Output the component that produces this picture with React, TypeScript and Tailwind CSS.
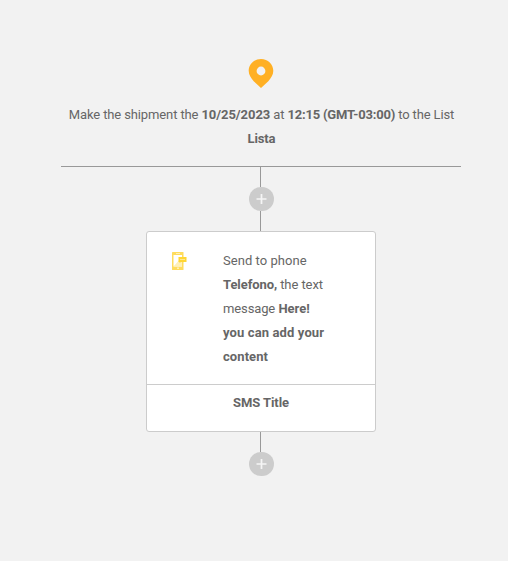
function PinIcon() {
  return (
    <svg width="26" height="30" viewBox="0 0 26 30" aria-hidden="true">
      <path
        fillRule="evenodd"
        fill="#ffb024"
        d="M13 1C6 1 .7 6.200 .7 12.800c0 4.200 2.300 7.200 5 10.400L13 30l7.300-6.800c2.700-3.200 5-6.200 5-10.400C25.300 6.200 20 1 13 1ZM13 8.600a4.400 4.400 0 1 1 0 8.800a4.400 4.400 0 0 1 0-8.800Z"
      />
    </svg>
  );
}

function PhoneIcon() {
  return (
    <svg className="block" width="16" height="18" viewBox="0 0 16 18" aria-hidden="true">
      <rect width="11.500" height="18" rx="0.6" fill="#ffdc5c" />
      <rect x="1.500" y="3" width="8.500" height="11.500" fill="#fff" />
      <path d="M1.500 14.500L10 5v9.500Z" fill="#fff0b8" />
      <rect x="4" y="1" width="4" height="1" fill="#fff0b8" />
      <rect x="5" y="15.500" width="2" height="1.500" fill="#fff0b8" />
      <path d="M6.500 5H14.500v5H9l-1.500 1V10h-1Z" fill="#ffd633" />
      <path d="M8 7.500h5" stroke="#ffe98c" />
    </svg>
  );
}

function AddStep() {
  return (
    <>
      <div className="ml-[-1px] h-5 w-px bg-[#999]" />
      <button
        type="button"
        aria-label="Add step"
        className="grid h-6 w-[25px] place-items-center rounded-full bg-[#ccc]"
      >
        <svg width="11" height="10" viewBox="0 0 11 10" aria-hidden="true">
          <path d="M5.500 0v10M.5 5h10" stroke="#f5f5f5" strokeWidth="1.700" />
        </svg>
      </button>
    </>
  );
}

export default function App() {
  return (
    <main className="h-[561px] w-[508px] bg-[#f2f2f2] pl-[61px] pt-[58px] font-['Roboto',sans-serif] text-[13px] leading-6 text-[#666]">
      <div className="flex w-[400px] flex-col items-center">
        <PinIcon />
        <p className="mt-[15px] whitespace-nowrap pl-px text-center tracking-[-0.12px]">
          Make the shipment the <b className="tracking-[-0.06px]">10/25/2023</b> at{' '}
          <b className="tracking-[-0.2px]">12:15 (GMT-03:00)</b> to the List
          <br />
          <b>Lista</b>
        </p>
        <div className="mt-[15px] h-px w-full bg-[#999]" />
        <AddStep />
        <div className="ml-[-1px] h-5 w-px bg-[#999]" />
        <section className="h-[201px] w-[230px] rounded-[3px] border border-[#ccc] bg-white">
          <div className="flex h-[153px] border-b border-[#ccc] pl-[25px] pt-[17px]">
            <div className="w-[51px] pt-[3px]">
              <PhoneIcon />
            </div>
            <p className="whitespace-nowrap">
              <span className="tracking-[0.05px]">Send to phone</span>
              <br />
              <span className="tracking-[-0.08px]">
                <b>Telefono,</b> the text
              </span>
              <br />
              <span className="tracking-[-0.12px]">message</span> <b>Here!</b>
              <br />
              <b className="tracking-[0.12px]">you can add your</b>
              <br />
              <b className="tracking-[0.08px]">content</b>
            </p>
          </div>
          <p className="pt-1.5 text-center font-bold tracking-[-0.08px]">SMS Title</p>
        </section>
        <AddStep />
      </div>
    </main>
  );
}
